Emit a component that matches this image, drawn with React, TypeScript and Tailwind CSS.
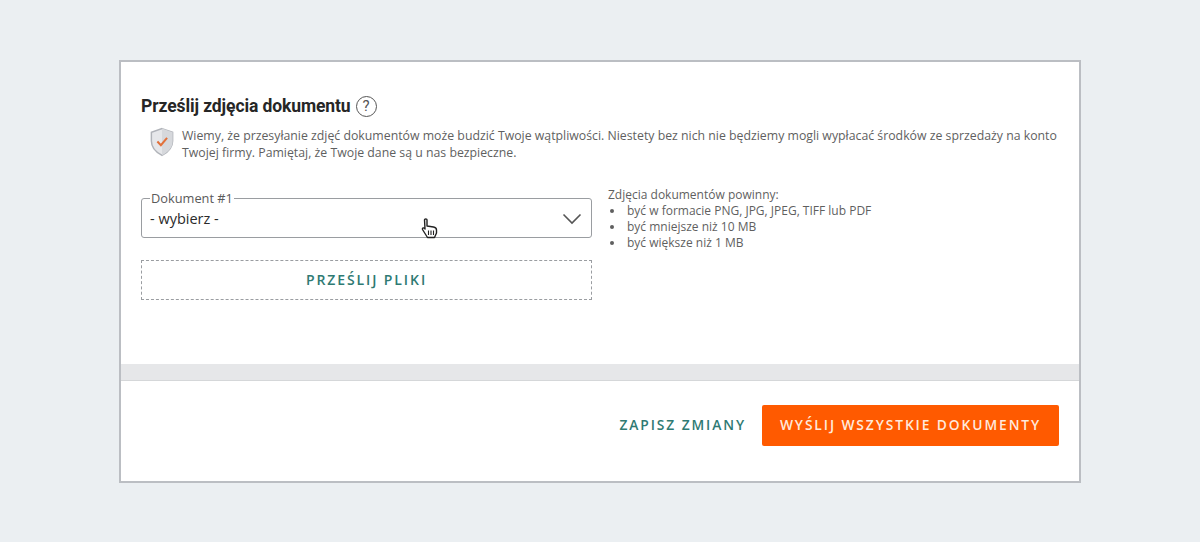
const OPEN = "font-['Open_Sans',sans-serif]";

function ShieldIcon() {
  return (
    <svg width="24" height="30" viewBox="0 0 26 32" className="shrink-0">
      <path d="M13 1.5 L24.5 5.5 V15 C24.5 22 20 27 13 30.5 C6 27 1.5 22 1.5 15 V5.5 Z" fill="#e6e7ea" stroke="#b0b3b9" strokeWidth="1.6" />
      <path d="M13 1.5 L24.5 5.5 V15 C24.5 22 20 27 13 30.5 Z" fill="#d6d8dc" />
      <path d="M8 15.5 L11.8 19.5 L18.5 11.5" fill="none" stroke="#e2703a" strokeWidth="2.2" />
    </svg>
  );
}

function HandCursor() {
  return (
    <svg width="17" height="21" viewBox="0 0 17 21" className="absolute left-[421px] top-[218px]">
      <path
        d="M3.5 1.8 C3.5 .6 6 .6 6 1.8 V8 L12.5 9 C14.5 9.4 15.5 10.5 15.5 12 V15 L13.5 19.5 H6.5 L1.5 11.5 C1 10 2.6 9.3 3.8 10.5 L4 11 Z"
        fill="#fff"
        stroke="#222"
        strokeWidth="1.4"
        strokeLinejoin="round"
      />
      <path d="M7.5 12.5 V17 M10 12.5 V17 M12.5 12.5 V17" stroke="#222" strokeWidth="1.1" />
    </svg>
  );
}

export default function App() {
  return (
    <div className={`relative flex h-[542px] w-[1200px] items-start justify-center overflow-hidden bg-[#ebeff2] pt-[60px] ${OPEN}`}>
      <div className="flex h-[423px] w-[962px] flex-col border-2 border-[#bbbec3] bg-white">
        <section className="h-[302px] px-5 pt-[32px]">
          <div className="flex items-center gap-[5px]">
            <h2 className="font-['Roboto',sans-serif] text-[17.5px] leading-6 font-bold tracking-[-0.1px] text-[#262626]">
              Prześlij zdjęcia dokumentu
            </h2>
            <span className="flex h-[21px] w-[21px] items-center justify-center rounded-full border-[1.3px] border-[#555] font-['Roboto',sans-serif] text-[15px] text-[#555]">
              ?
            </span>
          </div>

          <div className="mt-[9px] flex items-start gap-[8px] pl-[9px]">
            <ShieldIcon />
            <p className="w-[885px] text-[12.3px] leading-[17px] text-[#5f5f5f]">
              Wiemy, że przesyłanie zdjęć dokumentów może budzić Twoje wątpliwości. Niestety bez nich nie będziemy mogli wypłacać środków ze sprzedaży na konto Twojej firmy. Pamiętaj, że Twoje dane są u nas bezpieczne.
            </p>
          </div>

          <div className="mt-[29px] flex gap-4">
            <div className="w-[451px]">
              <fieldset className="h-[48px] rounded-[3px] border border-[#9a9da1] pr-[9px] pl-[8px]">
                <legend className="px-[1px] text-[12.8px] leading-[16px] text-[#5a5a5a]">Dokument #1</legend>
                <div className="flex h-[25px] items-center justify-between">
                  <span className="text-[14.5px] font-medium text-[#2a2a2a]">- wybierz -</span>
                  <svg width="20" height="12" viewBox="0 0 20 12" fill="none" stroke="#555" strokeWidth="1.6">
                    <path d="M1.5 1.5 L10 10 L18.5 1.5" />
                  </svg>
                </div>
              </fieldset>
              <button className="mt-[22px] flex h-[40px] w-full items-center justify-center border border-dashed border-[#9a9da1] pb-[1px] text-[14px] font-semibold tracking-[1.9px] text-[#2f7a73]">
                PRZEŚLIJ PLIKI
              </button>
            </div>

            <div className="-mt-[3px] text-[12px] leading-[16px] text-[#5f5f5f]">
              <p>Zdjęcia dokumentów powinny:</p>
              <ul className="list-inside list-disc pl-[2px]">
                <li>być w formacie PNG, JPG, JPEG, TIFF lub PDF</li>
                <li>być mniejsze niż 10 MB</li>
                <li>być większe niż 1 MB</li>
              </ul>
            </div>
          </div>
        </section>

        <div className="h-[17px] border-b border-[#d5d7d9] bg-[#e6e7e9]" />

        <footer className="flex flex-1 items-center justify-end gap-4 pr-5 pb-[12px]">
          <button className="text-[13.8px] font-semibold tracking-[1.9px] text-[#2f7a73]">ZAPISZ ZMIANY</button>
          <button className="flex h-[41px] w-[297px] items-center justify-center rounded-[2px] bg-[#ff5a00] text-[13.8px] font-semibold tracking-[1.9px] text-[#ffe9dc]">
            WYŚLIJ WSZYSTKIE DOKUMENTY
          </button>
        </footer>
      </div>
      <HandCursor />
    </div>
  );
}
